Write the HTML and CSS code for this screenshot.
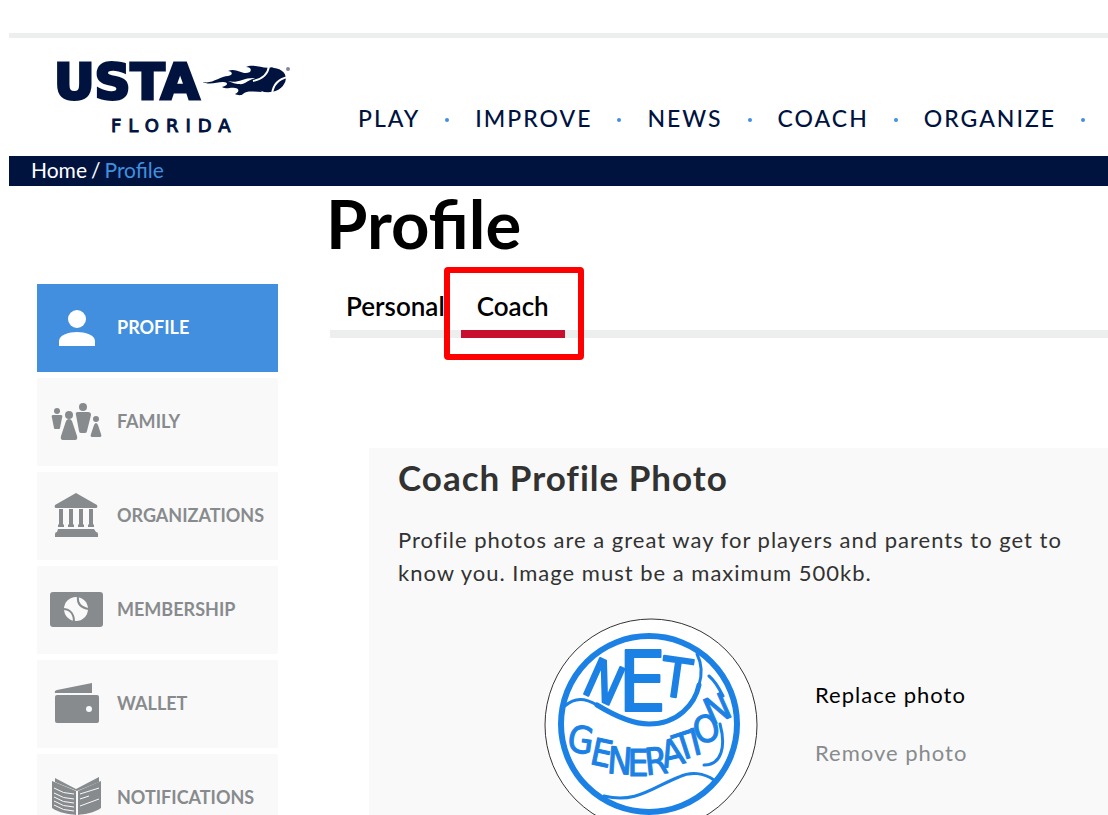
FILE: index.html
```html
<!DOCTYPE html>
<html lang="en">
<head>
    <meta charset="UTF-8">
    <meta name="viewport" content="width=device-width, initial-scale=1.0">
    <title>Profile</title>
    <link rel="stylesheet" href="styles.css">
</head>
<body>
    <div id="app">
        <header class="header">
            <a href="#" class="logo" aria-label="USTA Florida">
                <svg width="240" height="100" viewBox="0 -20 240 100">
                    <text class="logo-usta" x="-3" y="41">USTA</text>
                    <text class="logo-florida" x="54" y="74">FLORIDA</text>
                    <!-- flame -->
                    <path d="M144 23 C153 28 163 18 171 18 C177 17 175 13 171 13 C180 9 185 18 193 14 C195 11 193 9 189 9 C197 5 205 12 217 9 C206 13 200 20 200 24 C200 29 203 31 205 34 C198 34 190 32 186 36 C184 38 180 37 178 36 C183 34 182 30 178 30 C172 29 171 32 165 29 C171 28 172 24 166 24 C159 24 152 28 144 23 Z"/>
                    <path class="cut" d="M171 23 C181 26 186 19 199 20 C190 22 188 27 182 26 C178 26 176 25 171 23 Z"/>
                    <!-- ball -->
                    <ellipse cx="213" cy="22" rx="16" ry="12" transform="rotate(-12 213 22)"/>
                    <path class="seam" d="M196 23 C206 21 211 16 212 8 M215 36 C216 27 221 21 231 19"/>
                    <circle class="reg" cx="231" cy="11" r="2"/>
                </svg>
            </a>
            <nav>
                <ul class="menu">
                    <li><a href="#">PLAY</a></li>
                    <li><a href="#">IMPROVE</a></li>
                    <li><a href="#">NEWS</a></li>
                    <li><a href="#">COACH</a></li>
                    <li><a href="#">ORGANIZE</a></li>
                </ul>
            </nav>
        </header>

        <div class="crumbs">
            <a href="#">Home</a>
            <span>/</span>
            <a href="#" class="current">Profile</a>
        </div>

        <div class="content">
            <aside class="side">
                <a href="#" class="item active">
                    <svg width="56" height="48" viewBox="0 0 56 48">
                        <circle cx="28" cy="15" r="9"/>
                        <path d="M10 42 V37 C10 31 20 28 28 28 C36 28 46 31 46 37 V42 Z"/>
                    </svg>
                    <span>PROFILE</span>
                </a>
                <a href="#" class="item">
                    <svg width="56" height="48" viewBox="0 0 56 48">
                        <circle cx="8" cy="13" r="3"/>
                        <path d="M4 17 H12 Q14 17 13 20 L11 30 Q11 31 10 31 H6 Q5 31 5 30 L3 20 Q2 17 4 17 Z"/>
                        <circle cx="20" cy="17" r="4"/>
                        <path d="M20 21 Q22 21 23 23 L28 38 Q29 42 26 42 H14 Q11 42 12 38 L17 23 Q18 21 20 21 Z"/>
                        <circle cx="34" cy="9" r="4"/>
                        <path d="M29 14 H39 Q42 14 42 17 L38 33 Q38 35 36 35 H32 Q30 35 30 33 L27 17 Q26 14 29 14 Z"/>
                        <circle cx="47" cy="21" r="3"/>
                        <path d="M47 25 Q48 25 49 27 L52 36 Q53 39 51 39 H43 Q41 39 42 36 L45 27 Q46 25 47 25 Z"/>
                    </svg>
                    <span>FAMILY</span>
                </a>
                <a href="#" class="item">
                    <svg width="56" height="48" viewBox="0 0 56 48">
                        <path d="M27 1 L48 13 Q49 16 47 16 H7 Q5 16 6 13 Z"/>
                        <path d="M10 17 H14 V32 L15 33 V35 H9 V33 L10 32 Z M20 17 H24 V32 L25 33 V35 H19 V33 L20 32 Z M30 17 H34 V32 L35 33 V35 H29 V33 L30 32 Z M40 17 H44 V32 L45 33 V35 H39 V33 L40 32 Z"/>
                        <path d="M9 37 H45 L47 40 Q49 40 49 42 V45 H6 V42 Q6 40 8 40 Z"/>
                    </svg>
                    <span>ORGANIZATIONS</span>
                </a>
                <a href="#" class="item">
                    <svg width="56" height="48" viewBox="0 0 56 48">
                        <rect x="1" y="6" width="53" height="35" rx="3"/>
                        <circle class="cut" cx="27" cy="23" r="12"/>
                        <path class="line" d="M29 10 C28 18 32 22 40 23 M14 23 C22 23 25 29 25 36"/>
                    </svg>
                    <span>MEMBERSHIP</span>
                </a>
                <a href="#" class="item">
                    <svg width="56" height="48" viewBox="0 0 56 48">
                        <path d="M6 13 Q5 11 8 10 L43 3 V13 Z"/>
                        <rect x="6" y="15" width="44" height="28" rx="2"/>
                        <circle class="cut" cx="40" cy="29" r="3"/>
                    </svg>
                    <span>WALLET</span>
                </a>
                <a href="#" class="item">
                    <svg width="56" height="48" viewBox="0 0 56 48">
                        <path d="M6 4 L27 15 L50 3 V8 L28 17 L6 8 Z"/>
                        <path d="M3 7 L27 17 V41 C20 40 10 39 3 34 Z"/>
                        <path d="M29 17 L52 7 V34 C45 39 36 40 29 41 Z"/>
                        <path class="text-line" d="M5 14 Q14 20 25 20 M5 19 Q14 25 25 25 M5 23 Q14 29 25 29 M5 27 Q14 33 25 33 M5 31 Q14 37 25 37 M31 20 L50 14 M31 25 L40 22 M31 32 L50 25"/>
                    </svg>
                    <span>NOTIFICATIONS</span>
                </a>
            </aside>

            <main class="main">
                <h1>Profile</h1>
                <div class="tabs">
                    <button type="button" class="tab">Personal</button>
                    <button type="button" class="tab selected">Coach</button>
                </div>

                <section class="card">
                    <h2>Coach Profile Photo</h2>
                    <p>Profile photos are a great way for players and parents to get to know you. Image must be a maximum 500kb.</p>
                    <div class="photo">
                        <svg width="214" height="214" viewBox="0 0 214 214" role="img" aria-label="Net Generation">
                            <circle class="photo-edge" cx="107" cy="107" r="106"/>
                            <g class="net">
                                <circle class="ring" cx="105" cy="106" r="88"/>
                                <path class="wave thin" d="M21 88 C31 79 41 80 53 87 C76 101 91 106 105 106"/>
                                <path class="wave" d="M53 87 C76 101 91 106 105 106 C134 106 151 86 155 67"/>
                                <path class="wave thin" d="M155 67 C159 54 157 44 153 36"/>
                                <path class="wave thin" d="M60 178 C92 186 109 169 135 159 C147 153 160 155 170 162"/>
                                <text class="net-big" x="60" y="83" transform="rotate(24 60 64)">N</text>
                                <text class="net-big tall" x="98" y="93">E</text>
                                <text class="net-big" x="132" y="79" transform="rotate(8 132 60)">T</text>
                                <text class="net-small" x="37" y="135" transform="rotate(8 37 121)">G</text>
                                <text class="net-small" x="58" y="148" transform="rotate(12 58 134)">E</text>
                                <text class="net-small" x="76" y="156" transform="rotate(4 76 142)">N</text>
                                <text class="net-small" x="94" y="158">E</text>
                                <text class="net-small" x="112" y="156" transform="rotate(-6 112 142)">R</text>
                                <text class="net-small" x="128" y="148" transform="rotate(-14 128 134)">A</text>
                                <text class="net-small" x="140" y="141" transform="rotate(-18 140 127)">T</text>
                                <text class="net-small" x="151" y="137" transform="rotate(-14 151 123)">I</text>
                                <text class="net-small" x="162" y="124" transform="rotate(-16 162 110)">O</text>
                                <text class="net-small" x="173" y="104" transform="rotate(-24 173 90)">N</text>
                                <path class="stroke" d="M165 58 C171 63 175 70 179 78 M176 106 C182 128 178 147 160 147"/>
                            </g>
                        </svg>
                        <div class="actions">
                            <button type="button">Replace photo</button>
                            <button type="button" class="remove">Remove photo</button>
                        </div>
                    </div>
                </section>
            </main>
        </div>
    </div>
</body>
</html>
```
FILE: styles.css
```css
* {
    margin: 0;
    padding: 0;
    box-sizing: border-box;
}
body {
    background: #fff;
    font-family: Lato, "Liberation Sans", sans-serif;
}
#app {
    margin-left: 9px;
    padding-top: 33px;
}
a {
    text-decoration: none;
    color: inherit;
}
button {
    background: none;
    border: none;
    font-family: inherit;
    cursor: pointer;
}

.header {
    display: flex;
    align-items: flex-end;
    gap: 61px;
    height: 123px;
    padding: 0 0 18px 48px;
    border-top: 5px solid #edeeee;
    color: #00133f;
}
.logo svg {
    display: block;
    fill: #00133f;
    overflow: visible;
}
.logo-usta {
    font-family: "DejaVu Sans", sans-serif;
    font-size: 50px;
    font-weight: 700;
    stroke: #00133f;
    stroke-width: 3;
}
.logo-florida {
    font-family: "DejaVu Sans", sans-serif;
    font-size: 18px;
    letter-spacing: 7px;
    stroke: #00133f;
}
.logo .cut {
    fill: #fff;
}
.logo .seam {
    fill: none;
    stroke: #fff;
    stroke-width: 2;
}
.logo .reg {
    fill: #8088a0;
}
.menu {
    display: flex;
    list-style: none;
    font-size: 23px;
    font-weight: 500;
    line-height: 28px;
    letter-spacing: 2px;
    white-space: nowrap;
    padding-bottom: 6px;
}
.menu li {
    display: flex;
    align-items: center;
}
.menu li::after {
    content: "";
    width: 4px;
    height: 4px;
    margin: 4px 26px 0 25px;
    border-radius: 50%;
    background: #418fde;
}

.crumbs {
    display: flex;
    gap: 4px;
    height: 30px;
    padding-left: 22px;
    background: #00133f;
    color: #fff;
    font-size: 21px;
    line-height: 27px;
}
.crumbs .current {
    color: #418fde;
}

.content {
    display: flex;
    gap: 52px;
    padding-left: 28px;
}
.side {
    display: flex;
    flex-direction: column;
    flex: none;
    gap: 6px;
    width: 241px;
    padding-top: 98px;
}
.item {
    display: flex;
    align-items: center;
    gap: 12px;
    height: 88px;
    padding-left: 12px;
    background: #f9f9f9;
    color: #888b8d;
    fill: #888b8d;
    font-size: 18px;
    font-weight: 700;
}
.item span {
    padding-bottom: 3px;
}
.item.active {
    background: #418fde;
    color: #fff;
    fill: #fff;
}
.item .cut {
    fill: #f9f9f9;
}
.item .line {
    fill: none;
    stroke: #888b8d;
    stroke-width: 2;
}
.item .text-line {
    fill: none;
    stroke: #f9f9f9;
}

.main {
    flex: 1;
    min-width: 0;
}
h1 {
    margin-left: -4px;
    color: #000;
    font-size: 67px;
    font-weight: 700;
    line-height: 74px;
}
.tabs {
    display: flex;
    margin-top: 24px;
    border-bottom: 8px solid #edeeee;
}
.tab {
    position: relative;
    height: 46px;
    padding: 0 16px 2px;
    font-size: 26px;
    font-weight: 600;
    color: #000;
}
.selected::before {
    content: "";
    position: absolute;
    left: 0;
    right: 0;
    bottom: -8px;
    height: 8px;
    background: #c8102e;
}
/* red frame around the open tab */
.selected::after {
    content: "";
    position: absolute;
    top: -17px;
    right: -19px;
    bottom: -30px;
    left: -17px;
    border: 6px solid #f00;
    border-radius: 4px;
}

.card {
    margin: 110px 0 0 39px;
    padding: 8px 29px 40px;
    background: #f9f9f9;
    color: #323232;
}
h2 {
    font-size: 35px;
    font-weight: 700;
    line-height: 42px;
    letter-spacing: 1px;
}
.card p {
    margin-top: 25px;
    font-size: 22px;
    line-height: 33px;
    letter-spacing: 1px;
}
.photo {
    display: flex;
    align-items: center;
    gap: 57px;
    margin-top: 29px;
    padding-left: 146px;
}
.photo svg {
    flex: none;
}
.photo-edge {
    fill: #fff;
    stroke: #333;
}
.net {
    fill: #1c81e5;
}
.ring,
.wave,
.stroke {
    fill: none;
    stroke: #1c81e5;
    stroke-width: 5;
    stroke-linecap: round;
}
.ring {
    stroke-width: 6;
}
.wave.thin,
.stroke {
    stroke-width: 3;
}
.net-big,
.net-small {
    font-family: "Liberation Sans Narrow", "DejaVu Sans Condensed", sans-serif;
    text-anchor: middle;
    stroke: #1c81e5;
    stroke-linejoin: round;
}
.net-big {
    font-size: 54px;
    stroke-width: 2;
}
.net-big.tall {
    font-size: 84px;
}
.net-small {
    font-size: 37px;
}
.actions {
    display: flex;
    flex-direction: column;
    align-items: flex-start;
    gap: 30px;
    padding-bottom: 2px;
}
.actions button {
    color: #000;
    font-size: 22px;
    line-height: 28px;
    letter-spacing: 1px;
}
.actions .remove {
    color: #888b8d;
}
```
